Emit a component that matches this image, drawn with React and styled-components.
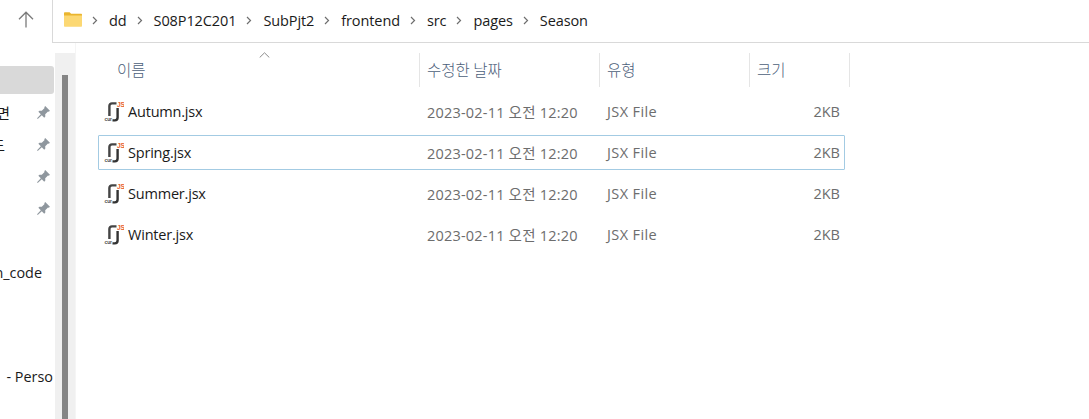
import React from "react";
import styled, { createGlobalStyle } from "styled-components";

const Global = createGlobalStyle`
  html, body { margin: 0; padding: 0; background: #fff; overflow: hidden; }
  body { font-family: "Open Sans", "Noto Sans CJK KR", sans-serif; }
  #root { width: 1089px; height: 419px; }
`;

const Window = styled.div`
  width: 1089px;
  height: 419px;
  display: flex;
  flex-direction: column;
  overflow: hidden;
  background: #fff;
`;

const TopBar = styled.div`
  height: 43px;
  flex: none;
  display: flex;
`;

const UpButton = styled.div`
  width: 52px;
  display: flex;
  align-items: center;
  justify-content: center;
  color: #7a7a7a;
  padding-bottom: 4px;
  box-sizing: border-box;
`;

const AddressBox = styled.div`
  flex: 1;
  display: flex;
  align-items: center;
  padding: 0 0 2px 11px;
  border-left: 1px solid #d9d9d9;
  border-bottom: 1px solid #d9d9d9;
  color: #1a1a1a;
  font-size: 14.5px;
  letter-spacing: -0.1px;
`;

const FolderIcon = styled.svg`
  width: 18px;
  height: 15px;
  flex: none;
  margin-bottom: 1px;
`;

const Crumb = styled.span`
  white-space: nowrap;
`;

const Chevron = styled.svg`
  width: 6px;
  height: 9px;
  margin: 1px 11px 0 10px;
  flex: none;
`;

const Body = styled.div`
  flex: 1;
  display: flex;
  min-height: 0;
`;

const Sidebar = styled.div`
  width: 54px;
  flex: none;
  padding-top: 23px;
  overflow: hidden;
`;

const NavSelected = styled.div`
  height: 28px;
  background: #d9d9d9;
  border-radius: 0 3px 3px 0;
  margin-bottom: 2px;
`;

const NavRow = styled.div`
  height: 32px;
  display: flex;
  align-items: center;
  margin-top: ${(p) => p.$gap || 0}px;
`;

const NavLabel = styled.div`
  flex: 1;
  min-width: 0;
  display: flex;
  justify-content: flex-end;
  overflow: hidden;
  white-space: pre;
  padding-right: ${(p) => p.$pad}px;
  font-size: 14.4px;
  color: #1a1a1a;
`;

const Pin = styled.svg`
  width: 15px;
  height: 15px;
  margin-right: 3px;
  flex: none;
`;

const ScrollTrack = styled.div`
  width: 20px;
  flex: none;
  background: #f0f0f0;
  padding: 22px 7px 0 7px;
  box-sizing: border-box;
  margin-left: 1px;
  margin-top: 10px;
`;

const ScrollThumb = styled.div`
  height: 100%;
  background: #858585;
`;

const Content = styled.div`
  flex: 1;
  min-width: 0;
  border-left: 1px solid #f5f5f5;
  padding: 10px 0 0 22px;
`;

const HeaderRow = styled.div`
  position: relative;
  display: grid;
  grid-template-columns: 322px 180px 150px 100px;
  height: 34px;
`;

const HeaderCell = styled.div`
  display: flex;
  align-items: center;
  padding-left: ${(p) => p.$pad}px;
  padding-bottom: 3px;
  border-right: 1px solid #e5e5e5;
  font-size: 15.5px;
  font-weight: 300;
  color: #4c607a;
  font-family: "Noto Sans CJK KR", sans-serif;
`;

const SortCaret = styled.svg`
  position: absolute;
  left: 161px;
  top: -1px;
  width: 11px;
  height: 6px;
`;

const FileList = styled.div`
  margin-top: 7px;
  display: flex;
  flex-direction: column;
  gap: 6px;
`;

const FileRow = styled.div`
  width: 747px;
  height: 35px;
  box-sizing: border-box;
  display: grid;
  grid-template-columns: 321px 180px 149px 91px;
  align-items: center;
  border: 1px solid ${(p) => (p.$focus ? "#a3cbe3" : "transparent")};
  border-radius: 1px;
  font-size: 14.5px;
`;

const NameCell = styled.div`
  display: flex;
  align-items: center;
  gap: 4px;
  padding-left: 5px;
  color: #1a1a1a;
  letter-spacing: -0.2px;
`;

const MetaCell = styled.div`
  color: #6d6d6d;
  padding-left: 7px;
  white-space: nowrap;
  letter-spacing: ${(p) => p.$ls}px;
`;

const SizeCell = styled.div`
  color: #6d6d6d;
  text-align: right;
`;

const IconBox = styled.svg`
  width: 20px;
  height: 22px;
  flex: none;
`;

const FileIcon = () => (
  <IconBox viewBox="0 0 20 22">
    <path d="M5.4 15V5C5.4 3.2 6.4 2.4 8 2.4H12.5" fill="none" stroke="#444" strokeWidth="2.4" />
    <path d="M13.6 7V16.5C13.6 18.6 12.6 19.4 10.8 19.4H8.5" fill="none" stroke="#333" strokeWidth="2.4" />
    <text x="13" y="6.4" fontSize="6.6" fontWeight="700" fill="#e8602c" fontFamily="Liberation Sans, sans-serif">JS</text>
    <text x="0.6" y="19.6" fontSize="5" fontWeight="700" fill="#4a4a4a" fontFamily="Liberation Sans, sans-serif">cur</text>
  </IconBox>
);

const crumbs = ["dd", "S08P12C201", "SubPjt2", "frontend", "src", "pages", "Season"];
const files = ["Autumn.jsx", "Spring.jsx", "Summer.jsx", "Winter.jsx"];

const ChevronIcon = () => (
  <Chevron viewBox="0 0 6 9">
    <path d="M1 1l3.5 3.5L1 8" fill="none" stroke="#6e6e6e" strokeWidth="1.2" />
  </Chevron>
);

const PinIcon = () => (
  <Pin viewBox="0 0 14 14">
    <path d="M8.6 1 13 5.4l-1 .9-.8-.3-2.6 2.6.1 2.2-1 1L5.4 9.5 1.6 13 1 12.4l3.5-3.8L2.2 6.3l1-1 2.2.1L8 2.8l-.3-.8z" fill="#8f979e" />
  </Pin>
);

export default function App() {
  return (
    <Window>
      <Global />
      <TopBar>
        <UpButton>
          <svg width="16" height="17" viewBox="0 0 16 17">
            <path d="M8 16.5V1.2M1 8.2l7-7 7 7" fill="none" stroke="currentColor" strokeWidth="1.3" />
          </svg>
        </UpButton>
        <AddressBox>
          <FolderIcon viewBox="0 0 18 15">
            <path d="M0 1.2C0 .6.4.2 1 .2h4.6l1.5 1.6H17c.6 0 1 .4 1 1V4H0z" fill="#eab52e" />
            <path d="M0 3.6h18v10.2c0 .6-.4 1-1 1H1c-.6 0-1-.4-1-1z" fill="#fcd873" />
          </FolderIcon>
          {crumbs.map((c) => (
            <React.Fragment key={c}>
              <ChevronIcon />
              <Crumb>{c}</Crumb>
            </React.Fragment>
          ))}
        </AddressBox>
      </TopBar>
      <Body>
        <Sidebar>
          <NavSelected />
          <NavRow><NavLabel $pad={26}>바탕 화면</NavLabel><PinIcon /></NavRow>
          <NavRow><NavLabel $pad={31}>다운로드</NavLabel><PinIcon /></NavRow>
          <NavRow><NavLabel $pad={0} /><PinIcon /></NavRow>
          <NavRow><NavLabel $pad={0} /><PinIcon /></NavRow>
          <NavRow />
          <NavRow><NavLabel $pad={12}>main_code</NavLabel></NavRow>
          <NavRow $gap={72}><NavLabel $pad={1}>Project   - Perso</NavLabel></NavRow>
        </Sidebar>
        <ScrollTrack><ScrollThumb /></ScrollTrack>
        <Content>
          <HeaderRow>
            <HeaderCell $pad={19}>이름</HeaderCell>
            <HeaderCell $pad={7}>수정한 날짜</HeaderCell>
            <HeaderCell $pad={7}>유형</HeaderCell>
            <HeaderCell $pad={7}>크기</HeaderCell>
            <SortCaret viewBox="0 0 11 6">
              <path d="M.7 5.5 5.5.8l4.8 4.7" fill="none" stroke="#8a8a8a" strokeWidth="1" />
            </SortCaret>
          </HeaderRow>
          <FileList>
            {files.map((f) => (
              <FileRow key={f} $focus={f === "Spring.jsx"}>
                <NameCell><FileIcon />{f}</NameCell>
                <MetaCell $ls={0.2}>2023-02-11 오전 12:20</MetaCell>
                <MetaCell $ls={0.4}>JSX File</MetaCell>
                <SizeCell>2KB</SizeCell>
              </FileRow>
            ))}
          </FileList>
        </Content>
      </Body>
    </Window>
  );
}
